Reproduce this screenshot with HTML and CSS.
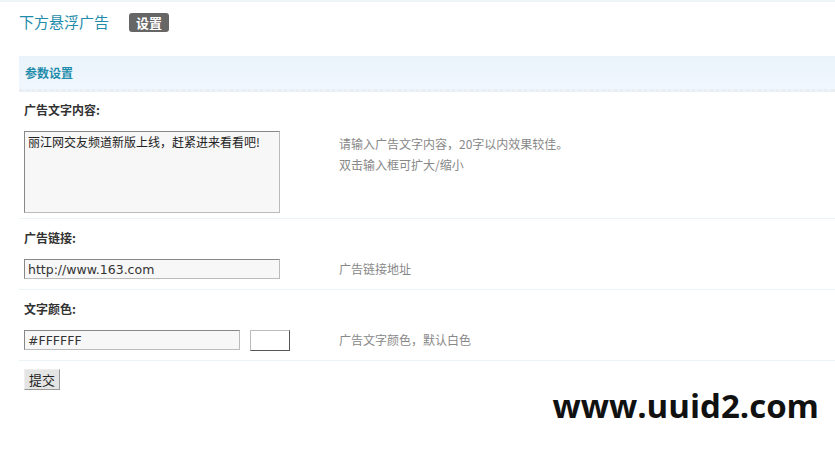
FILE: index.html
```html
<!DOCTYPE html>
<html lang="zh">
<head>
<meta charset="utf-8">
<title>下方悬浮广告</title>
<link rel="stylesheet" href="styles.css">
</head>
<body>
<div class="topline"></div>
<div class="page">
  <div class="titlebar">
    <span class="title">下方悬浮广告</span>
    <span class="badge">设置</span>
  </div>
  <div class="panel">
    <div class="panel-head">参数设置</div>
    <div class="row row-first">
      <div class="label">广告文字内容:</div>
      <div class="field field-ta">
        <div class="control"><textarea class="ta">丽江网交友频道新版上线，赶紧进来看看吧!</textarea></div>
        <div class="hint">请输入广告文字内容，20字以内效果较佳。<br>双击输入框可扩大/缩小</div>
      </div>
    </div>
    <div class="row">
      <div class="label">广告链接:</div>
      <div class="field">
        <div class="control"><input class="txt txt-long" type="text" value="http://www.163.com"></div>
        <div class="hint">广告链接地址</div>
      </div>
    </div>
    <div class="row">
      <div class="label">文字颜色:</div>
      <div class="field">
        <div class="control"><input class="txt txt-short" type="text" value="#FFFFFF"><span class="swatch"></span></div>
        <div class="hint">广告文字颜色，默认白色</div>
      </div>
    </div>
    <div class="row row-submit">
      <button class="btn" type="button">提交</button>
      <div class="watermark">www.uuid2.com</div>
    </div>
  </div>
</div>
</body>
</html>
```

FILE: styles.css
```css
html, body {
  margin: 0;
  padding: 0;
  background: #ffffff;
  font-family: "Noto Sans CJK SC", "Liberation Sans", sans-serif;
  font-size: 12px;
  color: #333;
}
.topline {
  height: 2px;
  background: #eef5f7;
}
.page {
  padding-left: 19px;
}
.titlebar {
  display: flex;
  align-items: center;
  height: 40px;
  padding-bottom: 14px;
}
.title {
  font-size: 15px;
  color: #1f8cab;
  line-height: 20px;
}
.badge {
  margin-left: 20px;
  width: 40px;
  height: 19px;
  line-height: 19px;
  text-align: center;
  background: #666;
  color: #fff;
  font-weight: bold;
  font-size: 13px;
  border-radius: 3px;
}
.panel-head {
  height: 33px;
  line-height: 34px;
  padding-left: 6px;
  background: linear-gradient(#eaf3fb, #f1f7fd);
  border-bottom: 3px dotted #e9eef2;
  color: #1f8cab;
  font-weight: bold;
  font-size: 12px;
}
.row {
  border-top: 1px solid #eaf4f7;
  padding: 11px 0 10px 5px;
}
.row-first {
  border-top: none;
  padding-bottom: 5px;
}
.label {
  font-weight: bold;
  line-height: 14px;
  color: #333;
  padding-top: 1px;
  margin-bottom: 14px;
}
.row-first .label { padding-top: 0; }
.field {
  display: flex;
  align-items: center;
}
.field-ta { align-items: flex-start; }
.control {
  width: 315px;
  height: 20px;
  display: flex;
  align-items: center;
}
.field-ta .control { height: auto; }
.ta {
  display: block;
  box-sizing: border-box;
  width: 256px;
  height: 82px;
  margin: 0;
  padding: 2px 3px;
  border: 1px solid #888;
  border-right-color: #bbb;
  border-bottom-color: #bbb;
  background: #f7f7f7;
  font-family: "Noto Sans CJK SC", sans-serif;
  font-size: 12px;
  line-height: 16px;
  color: #222;
  resize: none;
}
.txt {
  box-sizing: border-box;
  height: 20px;
  margin: 0;
  padding: 0 3px;
  border: 1px solid #888;
  border-right-color: #bbb;
  border-bottom-color: #bbb;
  background: #f7f7f7;
  font-family: "DejaVu Sans", sans-serif;
  font-size: 12.5px;
  color: #333;
}
.txt-long { width: 256px; }
.txt-short { width: 216px; }
.swatch {
  display: inline-block;
  box-sizing: border-box;
  margin-left: 10px;
  width: 40px;
  height: 21px;
  border: 1px solid #bbb;
  border-right-color: #555;
  border-bottom-color: #555;
  background: #fff;
}
.hint {
  color: #888;
  line-height: 20px;
}
.field-ta .hint { margin-top: 2px; line-height: 21px; }
.row-submit {
  padding-top: 8px;
  display: flex;
  align-items: flex-start;
  justify-content: space-between;
}
.btn {
  width: 36px;
  height: 21px;
  margin: 0;
  padding: 0;
  background: #e4e4e4;
  border: 1px solid #999;
  border-left-color: #eee;
  border-top-color: #eee;
  font-family: "Noto Sans CJK SC", sans-serif;
  font-size: 13px;
  line-height: 18px;
  color: #222;
}
.watermark {
  margin-top: 17px;
  margin-right: 16px;
  font-family: "Open Sans", "DejaVu Sans", sans-serif;
  font-weight: 700;
  font-size: 33px;
  line-height: 40px;
  letter-spacing: 0;
  color: #111;
}
```
